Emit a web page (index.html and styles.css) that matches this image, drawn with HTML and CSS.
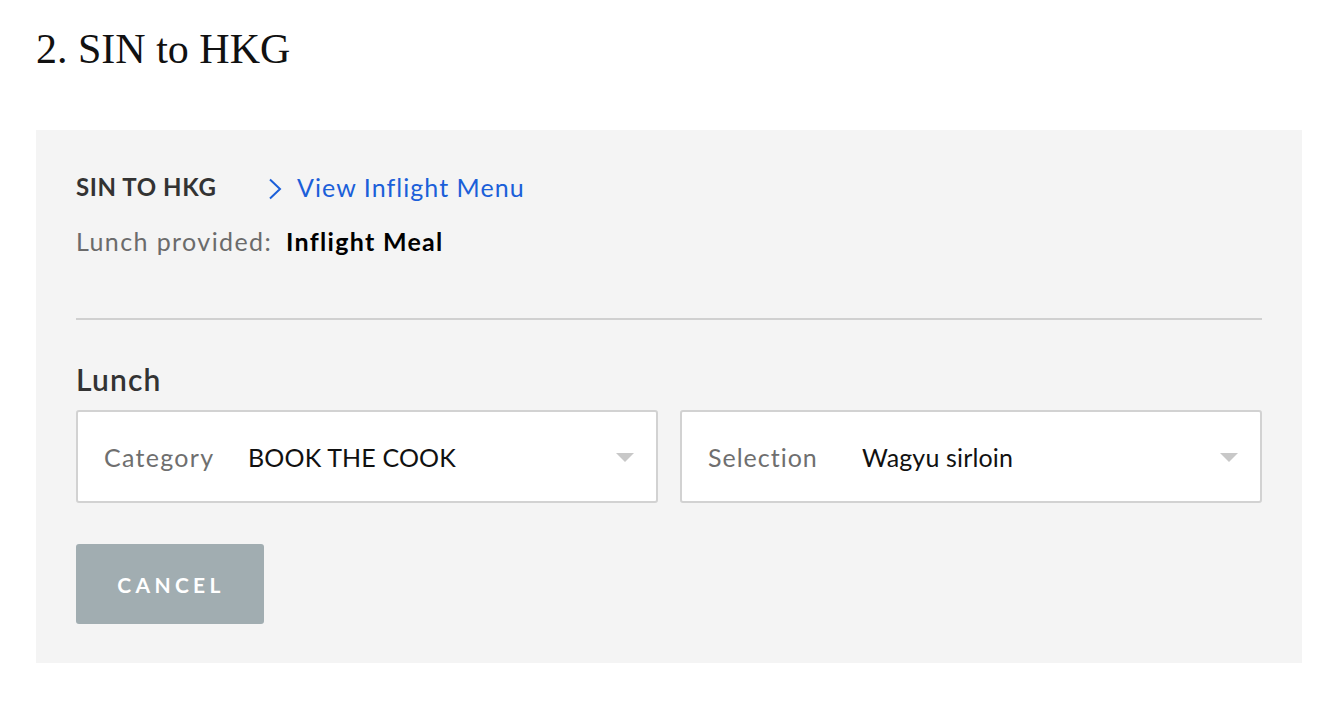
FILE: index.html
```html
<!DOCTYPE html>
<html>
<head>
<meta charset="utf-8">
<link rel="stylesheet" href="styles.css">
</head>
<body>
<div class="page">
  <h1 class="title">2. SIN to HKG</h1>
  <section class="panel">
    <div class="route-row">
      <span class="route">SIN TO HKG</span>
      <a class="menu-link" href="#">
        <svg class="chev" width="14" height="22" viewBox="0 0 14 22"><path d="M2 1.5 L12 11 L2 20.5" fill="none" stroke="#1b5fd9" stroke-width="2"/></svg>
        <span>View Inflight Menu</span>
      </a>
    </div>
    <div class="provided"><span class="provided-label">Lunch provided:</span><span class="provided-value">Inflight Meal</span></div>
    <hr class="divider">
    <h2 class="meal">Lunch</h2>
    <div class="selects">
      <div class="select">
        <span class="sel-label sel-label-cat">Category</span>
        <span class="sel-value">BOOK THE COOK</span>
        <span class="arrow"></span>
      </div>
      <div class="select">
        <span class="sel-label sel-label-sel">Selection</span>
        <span class="sel-value">Wagyu sirloin</span>
        <span class="arrow"></span>
      </div>
    </div>
    <button class="cancel">CANCEL</button>
  </section>
</div>
</body>
</html>
```
FILE: styles.css
```css
html, body {
  margin: 0;
  padding: 0;
  background: #ffffff;
}
.page {
  padding: 24px 32px 0 36px;
}
.title {
  font-family: "Liberation Serif", serif;
  font-weight: normal;
  font-size: 42px;
  line-height: 50px;
  margin: 0 0 56px 0;
  color: #111;
}
.panel {
  background: #f4f4f4;
  padding: 42px 40px 39px 40px;
  font-family: Lato, "Liberation Sans", sans-serif;
}
.route-row {
  display: flex;
  align-items: center;
  height: 30px;
}
.route {
  font-size: 24px;
  font-weight: 700;
  color: #333;
  line-height: 30px;
  letter-spacing: 0.6px;
  width: 192px;
}
.menu-link {
  display: flex;
  align-items: center;
  gap: 15px;
  color: #1b5fd9;
  text-decoration: none;
  font-size: 25px;
  letter-spacing: 1.05px;
  line-height: 30px;
}
.chev {
  display: block;
  margin-top: 4px;
}
.provided {
  margin-top: 24px;
  font-size: 25px;
  line-height: 30px;
}
.provided-label {
  color: #6b6b6b;
  letter-spacing: 1.4px;
  margin-right: 14px;
}
.provided-value {
  color: #000;
  font-weight: 700;
  letter-spacing: 1.3px;
}
.divider {
  border: 0;
  height: 2px;
  background: #d0d0d0;
  margin: 62px 0 0 0;
}
.meal {
  font-size: 30px;
  font-weight: 600;
  color: #333;
  line-height: 36px;
  letter-spacing: 1.2px;
  margin: 41px 0 13px 0;
}
.selects {
  display: grid;
  grid-template-columns: 1fr 1fr;
  gap: 22px;
}
.select {
  background: #fff;
  border: 2px solid #d2d2d2;
  border-radius: 3px;
  height: 89px;
  display: flex;
  align-items: center;
  padding: 0 22px 0 26px;
  font-size: 25px;
}
.sel-label {
  color: #6f6f6f;
  flex: none;
}
.sel-label-cat {
  width: 144px;
  letter-spacing: 1.3px;
}
.sel-label-sel {
  width: 154px;
  letter-spacing: 1px;
}
.sel-value {
  color: #111;
  flex: 1;
  letter-spacing: 0.15px;
}
.arrow {
  width: 0;
  height: 0;
  border-left: 9px solid transparent;
  border-right: 9px solid transparent;
  border-top: 9px solid #c8c8c8;
  margin-top: 2px;
}
.cancel {
  margin-top: 41px;
  width: 188px;
  height: 80px;
  border: 0;
  border-radius: 3px;
  background: #a1adb1;
  color: #fff;
  font-family: Lato, "Liberation Sans", sans-serif;
  font-weight: 700;
  font-size: 21px;
  letter-spacing: 4.3px;
  display: block;
  padding: 0 0 0 2px;
}
```
